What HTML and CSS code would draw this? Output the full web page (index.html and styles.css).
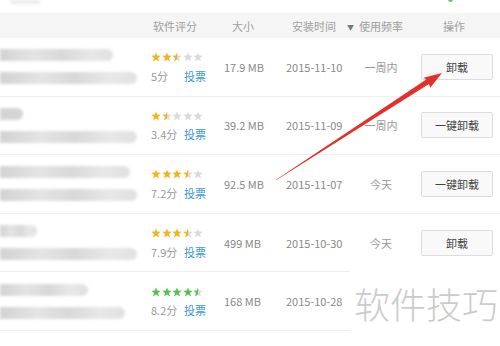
FILE: index.html
```html
<!DOCTYPE html>
<html lang="zh-CN">
<head>
    <meta charset="UTF-8">
    <title>软件卸载</title>
    <link rel="stylesheet" href="styles.css">
</head>
<body>
    <svg class="defs" width="0" height="0">
        <defs>
            <linearGradient id="halfGold"><stop offset="50%" stop-color="#f2b41c"/><stop offset="50%" stop-color="#dadada"/></linearGradient>
            <linearGradient id="halfGreen"><stop offset="50%" stop-color="#5cbf55"/><stop offset="50%" stop-color="#dadada"/></linearGradient>
            <symbol id="star" viewBox="0 0 10 10"><polygon points="5,0.4 6.2,3.6 9.7,3.7 7,5.9 8,9.4 5,7.4 2,9.4 3,5.9 0.3,3.7 3.8,3.6"/></symbol>
        </defs>
    </svg>

    <div class="page">
        <div class="topbar">
            <span class="blur-bit"></span>
            <span class="dot"></span>
        </div>

        <div class="head">
            <span></span>
            <span class="h-rate">软件评分</span>
            <span class="h-size">大小</span>
            <span class="h-date">安装时间<i class="sort">▼</i></span>
            <span class="h-freq">使用频率</span>
            <span class="h-op">操作</span>
        </div>

        <div class="row">
            <div class="name"><span class="bar w113"></span><span class="bar w137"></span></div>
            <div class="rate">
                <div class="stars gold">
                    <svg><use href="#star"/></svg><svg><use href="#star"/></svg><svg class="half"><use href="#star"/></svg><svg class="off"><use href="#star"/></svg><svg class="off"><use href="#star"/></svg>
                </div>
                <div class="score"><span class="pts">5分</span><a class="vote">投票</a></div>
            </div>
            <div class="size">17.9 MB</div>
            <div class="date">2015-11-10</div>
            <div class="freq">一周内</div>
            <div class="op"><button>卸载</button></div>
        </div>

        <div class="row">
            <div class="name"><span class="bar w23"></span><span class="bar w137"></span></div>
            <div class="rate">
                <div class="stars gold">
                    <svg><use href="#star"/></svg><svg class="half"><use href="#star"/></svg><svg class="off"><use href="#star"/></svg><svg class="off"><use href="#star"/></svg><svg class="off"><use href="#star"/></svg>
                </div>
                <div class="score"><span class="pts">3.4分</span><a class="vote">投票</a></div>
            </div>
            <div class="size">39.2 MB</div>
            <div class="date">2015-11-09</div>
            <div class="freq">一周内</div>
            <div class="op"><button>一键卸载</button></div>
        </div>

        <div class="row">
            <div class="name"><span class="bar w130"></span><span class="bar w137"></span></div>
            <div class="rate">
                <div class="stars gold">
                    <svg><use href="#star"/></svg><svg><use href="#star"/></svg><svg><use href="#star"/></svg><svg class="half"><use href="#star"/></svg><svg class="off"><use href="#star"/></svg>
                </div>
                <div class="score"><span class="pts">7.2分</span><a class="vote">投票</a></div>
            </div>
            <div class="size">92.5 MB</div>
            <div class="date">2015-11-07</div>
            <div class="freq">今天</div>
            <div class="op"><button>一键卸载</button></div>
        </div>

        <div class="row">
            <div class="name"><span class="bar w37"></span><span class="bar w137"></span></div>
            <div class="rate">
                <div class="stars gold">
                    <svg><use href="#star"/></svg><svg><use href="#star"/></svg><svg><use href="#star"/></svg><svg class="half"><use href="#star"/></svg><svg class="off"><use href="#star"/></svg>
                </div>
                <div class="score"><span class="pts">7.9分</span><a class="vote">投票</a></div>
            </div>
            <div class="size">499 MB</div>
            <div class="date">2015-10-30</div>
            <div class="freq">今天</div>
            <div class="op"><button>卸载</button></div>
        </div>

        <div class="row">
            <div class="name"><span class="bar w88"></span><span class="bar w125"></span></div>
            <div class="rate">
                <div class="stars green">
                    <svg><use href="#star"/></svg><svg><use href="#star"/></svg><svg><use href="#star"/></svg><svg><use href="#star"/></svg><svg class="half"><use href="#star"/></svg>
                </div>
                <div class="score"><span class="pts">8.2分</span><a class="vote">投票</a></div>
            </div>
            <div class="size">168 MB</div>
            <div class="date">2015-10-28</div>
            <div class="freq"></div>
            <div class="op"></div>
        </div>

        <!-- red annotation arrow drawn over the table -->
        <svg class="arrow" width="500" height="346" viewBox="0 0 500 346">
            <polygon fill="#e2312c" points="275.6,180.6 276.4,179.4 426.2,79.6 423.6,77.8 442,73 430.2,87.8 429,84"/>
        </svg>

        <div class="watermark">软件技巧</div>
    </div>
</body>
</html>
```

FILE: styles.css
```css
body {
    margin: 0;
    background: #fff;
    font-family: "Noto Sans CJK SC", "Noto Sans", sans-serif;
    font-size: 11px;
    color: #888;
}
.defs {
    position: absolute;
}
.page {
    position: relative;
    width: 500px;
    height: 346px;
    overflow: hidden;
}
.topbar {
    height: 13px;
    display: flex;
    justify-content: space-between;
    align-items: flex-start;
}
.blur-bit {
    width: 30px;
    height: 4px;
    margin-left: 10px;
    background: #ececec;
    filter: blur(1.5px);
}
.dot {
    width: 5px;
    height: 5px;
    margin: -3px 47px 0 0;
    border-radius: 50%;
    background: #6cc86a;
}
.head, .row {
    display: grid;
    grid-template-columns: 151px 73px 62px 66px 58px 1fr;
    align-items: center;
}
.head {
    height: 25px;
    background: #f5f5f5;
    color: #a0a0a0;
    white-space: nowrap;
}
.h-rate { padding-left: 2px; }
.h-size { padding-left: 8px; }
.h-date { padding-left: 6px; }
.sort {
    font-style: normal;
    font-size: 7px;
    color: #777;
    margin-left: 11px;
    vertical-align: 1px;
}
.h-freq { text-align: center; }
.h-op { padding-left: 33px; }

.row {
    height: 57.6px;
    border-bottom: 1px solid #eeeeee;
}
.name {
    display: flex;
    flex-direction: column;
    gap: 11px;
}
.bar {
    display: block;
    height: 12px;
    background: linear-gradient(90deg, #d2d2d2, #e4e4e4 30%, #d8d8d8 55%, #e8e8e8 80%, #e0e0e0);
    border-radius: 0 6px 6px 0;
    filter: blur(1.6px);
}
.w23 { width: 23px; background: #d4d4d4; }
.w37 { width: 37px; }
.w88 { width: 88px; }
.w113 { width: 113px; }
.w125 { width: 125px; }
.w130 { width: 130px; }
.w137 { width: 137px; }

.rate {
    line-height: 19px;
}
.stars {
    display: flex;
    gap: 0.5px;
    height: 19px;
    align-items: center;
}
.stars svg {
    width: 10px;
    height: 10px;
}
.gold svg { fill: #f2b41c; }
.green svg { fill: #5cbf55; }
.gold .half { fill: url(#halfGold); }
.green .half { fill: url(#halfGreen); }
.stars .off { fill: #dadada; }
.score {
    display: flex;
    color: #999;
}
.pts {
    width: 33px;
}
.vote {
    color: #3a98d8;
}
.size {
    color: #888;
}
.date {
    color: #888;
}
.freq {
    text-align: center;
    color: #999;
}
.op button {
    margin-left: 11px;
    width: 72px;
    height: 26px;
    font-family: inherit;
    font-size: 11px;
    color: #444;
    background: #f9f9f9;
    border: 1px solid #dcdcdc;
    border-radius: 2px;
    padding: 0;
}
.arrow {
    position: absolute;
    left: 0;
    top: 0;
}
.watermark {
    position: absolute;
    left: 350px;
    top: 264px;
    width: 150px;
    height: 82px;
    background: #fff;
    color: #cbcbcb;
    font-size: 36px;
    font-weight: 300;
    line-height: 78px;
    padding-left: 4px;
    box-sizing: border-box;
}
```
